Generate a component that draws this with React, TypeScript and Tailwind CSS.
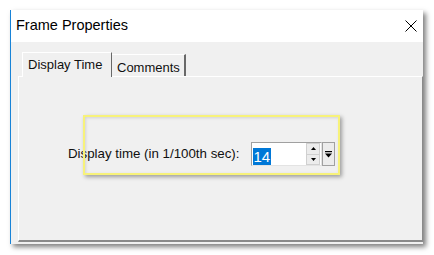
const font = { fontFamily: '"Liberation Sans", Arial, sans-serif' }

const CloseIcon = () => (
  <svg width="12" height="12" viewBox="0 0 12 12">
    <path d="M0.5 0.5L11.5 11.5M11.5 0.5L0.5 11.5" stroke="#000" strokeWidth="1" fill="none" />
  </svg>
)

const SpinBox = () => (
  <div className="flex items-stretch h-[24px]">
    <div className="w-[71px] flex bg-white border border-t-[#a0a0a0] border-l-[#a0a0a0] border-r-[#e3e3e3] border-b-[#e3e3e3] relative">
      <div className="flex-1 pl-[1px] pt-[2px]">
        <span className="inline-block bg-[#0078d7] text-white text-[15px] leading-[17px] pr-[1px]">14</span>
      </div>
      <div className="absolute left-[1px] bottom-[0px] w-[18px] h-[2px] bg-[#0078d7]" />
      <div className="w-[14px] flex flex-col mr-[1px]">
        <div className="flex-1 bg-[#ececec] border border-[#d0d0d0] flex items-center justify-center">
          <svg width="5" height="3" viewBox="0 0 5 3"><path d="M2.5 0L5 3H0Z" fill="#000" /></svg>
        </div>
        <div className="flex-1 bg-[#ececec] border border-t-0 border-[#d0d0d0] flex items-center justify-center">
          <svg width="5" height="3" viewBox="0 0 5 3"><path d="M0 0H5L2.5 3Z" fill="#000" /></svg>
        </div>
      </div>
    </div>
    <div className="w-[13px] bg-[#ececec] border border-[#a0a0a0] flex items-center justify-center">
      <svg width="7" height="7" viewBox="0 0 7 7">
        <rect x="0" y="0" width="7" height="1.2" fill="#000" />
        <path d="M0 2.5H7L3.5 6.5Z" fill="#000" />
      </svg>
    </div>
  </div>
)

export default function App() {
  return (
    <div className="w-[434px] h-[255px] bg-white pt-[10px] pl-[10px]" style={font}>
      <div className="w-[413px] h-[234px] bg-[#f0f0f0] border-l border-[#1883d7] shadow-[3px_3px_5px_rgba(0,0,0,0.5)] flex flex-col">
        <div className="h-[32px] bg-white flex items-center justify-between pl-[5px] pr-[6px]">
          <span className="text-[14.5px] text-black">Frame Properties</span>
          <CloseIcon />
        </div>

        <div className="flex-1 flex flex-col pl-[7px] pt-[10px] pb-[2px]">
          {/* tabs */}
          <div className="h-[24px] flex items-end pl-[4px] relative z-10">
            <div className="w-[90px] h-[25px] -mb-[1px] bg-[#f0f0f0] border-t border-l border-white border-r border-r-[#696969] pl-[5px] pt-[2px] text-[13px] text-[#111]">
              Display Time
            </div>
            <div className="w-[74px] h-[22px] bg-[#f0f0f0] border-t border-white border-r-2 border-r-[#696969] pl-[5px] pt-[3px] text-[13px] text-[#111]">
              Comments
            </div>
          </div>

          {/* panel */}
          <div className="flex-1 relative border-t border-l border-white border-r border-r-[#8a8a8a] border-b-2 border-b-[#8a8a8a]">
            <div className="flex items-center pt-[65px] pl-[49px]">
              <span className="text-[13.3px] text-[#111] mr-[12px]">Display time (in 1/100th sec):</span>
              <SpinBox />
            </div>
            <div className="absolute left-[64px] top-[38px] w-[257px] h-[60px] border-2 border-[#f7f27a] shadow-[2px_2px_4px_rgba(0,0,0,0.35),inset_1px_1px_3px_rgba(0,0,0,0.12)]" />
          </div>
        </div>
      </div>
    </div>
  )
}
